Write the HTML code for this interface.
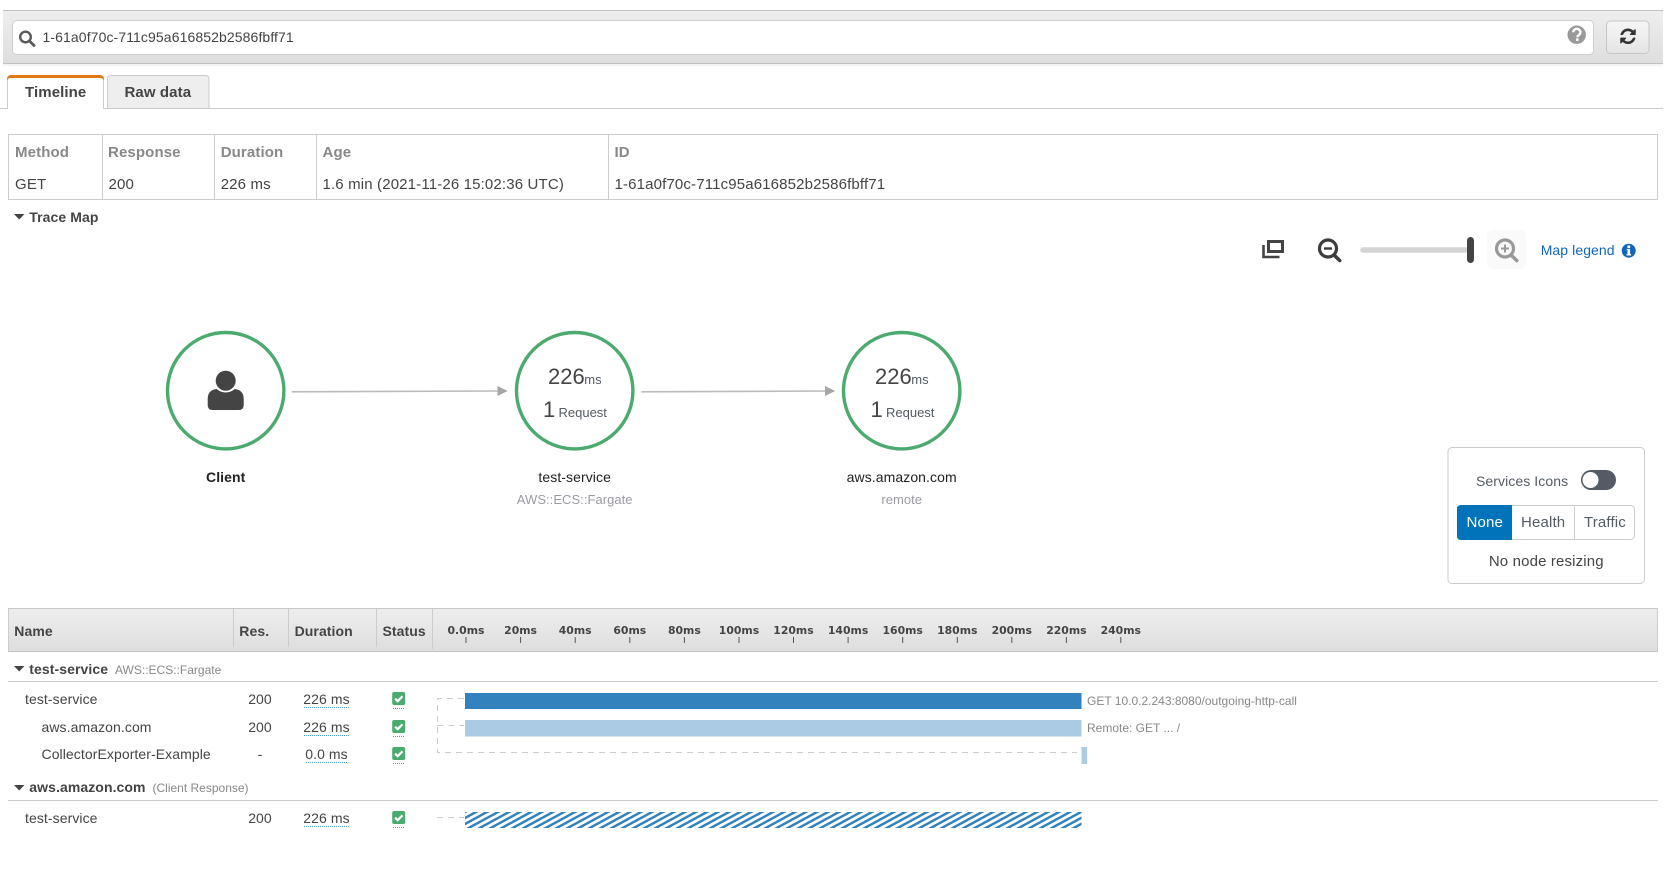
<!DOCTYPE html>
<html><head><meta charset="utf-8"><title>Trace</title>
<style>
html,body{margin:0;padding:0;background:#fff;width:1666px;height:876px;overflow:hidden}
body{position:relative;font-family:"Liberation Sans",sans-serif}
svg{display:block;position:absolute;left:0;top:0}
.t{position:absolute;white-space:pre;color:#444}
.c{width:300px;margin-left:-150px;text-align:center}
.s22{font-size:22px;line-height:25px}
.s15{font-size:15px;line-height:17px;letter-spacing:.15px}
.s14{font-size:14px;line-height:16px;letter-spacing:.08px}
.s13{font-size:13px;line-height:15px}
.s12{font-size:12px;line-height:14px;color:#888}
.b{font-weight:700}
.s15.b{letter-spacing:.1px}
.h{font-size:15px;line-height:17px;font-weight:700;color:#888;letter-spacing:.12px}
.tk{font-family:"DejaVu Sans",sans-serif;font-size:10.85px;font-weight:700;fill:#444;text-anchor:middle}
.g{color:#545b64}
.l{color:#9a9aa8;letter-spacing:.04px}
.k{color:#222}
</style></head><body>
<svg width="1666" height="876" viewBox="0 0 1666 876" xmlns="http://www.w3.org/2000/svg">
<defs>
<linearGradient id="gh" x1="0" y1="0" x2="0" y2="1"><stop offset="0" stop-color="#eeeeee"/><stop offset="1" stop-color="#dedede"/></linearGradient>
<linearGradient id="gb" x1="0" y1="0" x2="0" y2="1"><stop offset="0" stop-color="#f6f6f6"/><stop offset="1" stop-color="#e4e4e4"/></linearGradient>
<pattern id="hatch" patternUnits="userSpaceOnUse" x="465" y="812" width="11" height="6">
<rect width="11" height="6" fill="#fff"/>
<path d="M-2 7.09L13-1.09M-13 7.09L2-1.09M9 7.09L24-1.09" stroke="#3182bd" stroke-width="2.500" fill="none"/>
</pattern>
<g id="chk"><rect x="-6.5" y="-6.5" width="13" height="13" rx="2" fill="#4bab6e"/><path d="M-3.6 0.2L-1 2.7L3.8-2.2" fill="none" stroke="#fff" stroke-width="2.2"/></g>
</defs>

<!-- top bar -->
<rect x="3" y="10.5" width="1660" height="53" fill="url(#gh)"/>
<path d="M3 10.5H1663" stroke="#c4c4c4"/><path d="M3 63.5H1663" stroke="#c0c0c0"/>
<rect x="3" y="64" width="1660" height="2" fill="#f4f4f4"/>
<rect x="12.5" y="20.5" width="1581" height="34" rx="4" fill="#fff" stroke="#cfcfcf"/>
<circle cx="25.5" cy="37" r="5.3" fill="none" stroke="#5a5a5a" stroke-width="2.4"/>
<path d="M29.5 41L34 45.5" stroke="#5a5a5a" stroke-width="2.8" stroke-linecap="round"/>
<circle cx="1576.7" cy="34.7" r="9.2" fill="#999"/>
<path d="M1573.2 32.3a3.6 3.4 0 1 1 5.6 2.8q-1.400 .9-1.400 2.100" fill="none" stroke="#fff" stroke-width="2.300"/>
<rect x="1576.100" y="38.400" width="2.500" height="2.500" fill="#fff"/>
<rect x="1606.500" y="21" width="42.500" height="32.500" rx="4" fill="url(#gb)" stroke="#c6c6c6"/>
<g transform="translate(1618.950 27.250) scale(.0101)"><path fill="#333" d="M1639 1056q0 5-1 7-64 268-268 434.500t-478 166.500q-146 0-282.500-55t-243.500-157l-129 129q-19 19-45 19t-45-19-19-45v-448q0-26 19-45t45-19h448q26 0 45 19t19 45-19 45l-137 137q71 66 161 102t187 36q134 0 250-65t186-179q11-17 53-117 8-23 30-23h192q13 0 22.500 9.500t9.500 22.500zm25-800v448q0 26-19 45t-45 19h-448q-26 0-45-19t-19-45 19-45l138-138q-148-137-349-137-134 0-250 65t-186 179q-11 17-53 117-8 23-30 23h-199q-13 0-22.500-9.500t-9.500-22.500v-7q65-268 270-434.500t480-166.500q146 0 284 55.500t245 156.500l130-129q19-19 45-19t45 19 19 45z"/></g>

<!-- tabs -->
<path d="M0 108.500H1663" stroke="#ccc"/>
<path d="M7.500 108.500V79q0-3.500 3.500-3.500h89q3.500 0 3.500 3.500v29.500" fill="#fff" stroke="#ccc"/>
<path d="M8 108h95v1.500h-95z" fill="#fff"/>
<path d="M7 79.500q0-4.500 4.500-4.500h88q4.500 0 4.500 4.500v1q-1-2.500-4-2.500h-89q-3 0-4 2.500z" fill="#e47911"/>
<path d="M107.500 108.500V79q0-3.500 3.500-3.500h94.500q3.500 0 3.500 3.500v29.500z" fill="#eee" stroke="#ccc"/>

<!-- summary table -->
<rect x="8.500" y="134.500" width="1649" height="65" fill="#fff" stroke="#ccc"/>
<path d="M102.500 134.500V199.500M214.500 134.500V199.500M316.500 134.500V199.500M608.500 134.500V199.500" stroke="#ccc"/>

<path d="M14 214H24.500L19.200 219.500z" fill="#444"/>

<!-- map tools -->
<path d="M1263.500 245V257H1279.500" fill="none" stroke="#444" stroke-width="2.600"/>
<rect x="1268.500" y="241.500" width="14" height="10" fill="none" stroke="#444" stroke-width="3"/>
<circle cx="1328" cy="248.500" r="8.500" fill="none" stroke="#3d3d3d" stroke-width="3.200"/>
<path d="M1324 248.500H1332" stroke="#3d3d3d" stroke-width="2.400"/>
<path d="M1334.500 255.500L1339.700 260.500" stroke="#3d3d3d" stroke-width="3.600" stroke-linecap="round"/>
<rect x="1360.300" y="247.300" width="114" height="5.500" rx="2.700" fill="#d5d5d5"/>
<rect x="1467" y="237" width="7" height="26" rx="3.500" fill="#444"/>
<rect x="1487" y="230" width="39" height="39" rx="6" fill="#fafafa"/>
<circle cx="1505" cy="248.500" r="8.500" fill="none" stroke="#999" stroke-width="3.200"/>
<path d="M1501 248.500H1509M1505 244.500V252.500" stroke="#999" stroke-width="2"/>
<path d="M1511.500 255.500L1516.700 260.500" stroke="#999" stroke-width="3.600" stroke-linecap="round"/>
<circle cx="1628.700" cy="250.700" r="7" fill="#1166bb"/>
<rect x="1627.500" y="249.500" width="2.600" height="5.500" fill="#fff"/><rect x="1626.500" y="254" width="4.600" height="1.500" fill="#fff"/><rect x="1626.700" y="249" width="3" height="1.300" fill="#fff"/><circle cx="1628.800" cy="246.800" r="1.500" fill="#fff"/>

<!-- map nodes -->
<circle cx="225.700" cy="390.700" r="58.200" fill="#fff" stroke="#4caa6e" stroke-width="3.400"/>
<circle cx="574.700" cy="390.700" r="58.200" fill="#fff" stroke="#4caa6e" stroke-width="3.400"/>
<circle cx="901.700" cy="390.700" r="58.200" fill="#fff" stroke="#4caa6e" stroke-width="3.400"/>
<path d="M207.700 405v-6q0-9 9-10q4 3.500 9 3.500t9-3.500q9 1 9 10v6q0 5-5 5h-26q-5 0-5-5z" fill="#444"/>
<circle cx="225.700" cy="380.700" r="10" fill="#444"/>
<path d="M291.700 391.800L498 391" stroke="#bbb" stroke-width="1.600"/>
<path d="M497.500 386L507.700 391L497.500 396z" fill="#a6a6a6"/>
<path d="M641.500 391.800L827 391" stroke="#bbb" stroke-width="1.600"/>
<path d="M825 386L835.200 391L825 396z" fill="#a6a6a6"/>

<!-- panel -->
<rect x="1448" y="447.500" width="196.500" height="136" rx="4" fill="#fff" stroke="#ccc"/>
<rect x="1581" y="470" width="35" height="20" rx="10" fill="#545b64"/>
<circle cx="1590.500" cy="480" r="8" fill="#fff"/>
<rect x="1457.500" y="505.500" width="177" height="34" rx="4" fill="#fff" stroke="#ccc"/>
<path d="M1461 505H1512V540H1461q-4 0-4-4V509q0-4 4-4z" fill="#0073bb"/>
<path d="M1574.500 505.500V539.500" stroke="#ccc"/>

<!-- timeline header -->
<rect x="8" y="608.500" width="1650" height="43" fill="url(#gh)"/>
<path d="M8 608.500H1658" stroke="#c8c8c8"/><path d="M8 651.500H1658" stroke="#c4c4c4"/>
<path d="M8.500 608.500V651.500M1657.500 608.500V651.500" stroke="#ccc"/>
<path d="M233.500 609V647M288.500 609V647M376.500 609V647M432.500 609V649" stroke="#ccc"/>

<text x="466" y="634" class="tk">0.0ms</text><text x="520.600" y="634" class="tk">20ms</text><text x="575.200" y="634" class="tk">40ms</text><text x="629.800" y="634" class="tk">60ms</text><text x="684.400" y="634" class="tk">80ms</text><text x="739" y="634" class="tk">100ms</text><text x="793.500" y="634" class="tk">120ms</text><text x="848.100" y="634" class="tk">140ms</text><text x="902.700" y="634" class="tk">160ms</text><text x="957.300" y="634" class="tk">180ms</text><text x="1011.800" y="634" class="tk">200ms</text><text x="1066.400" y="634" class="tk">220ms</text><text x="1120.800" y="634" class="tk">240ms</text>
<path d="M466 637V643M520.600 637V643M575.200 637V643M629.800 637V643M684.400 637V643M739 637V643M793.500 637V643M848.100 637V643M902.700 637V643M957.300 637V643M1011.800 637V643M1066.400 637V643M1120.800 637V643" stroke="#555" stroke-width="1"/>

<!-- groups -->
<path d="M14 666H24.500L19.200 671.500z" fill="#444"/>
<path d="M8 681.500H1658" stroke="#ccc"/>
<path d="M14 785H24.500L19.200 790.500z" fill="#444"/>
<path d="M8 800.500H1658" stroke="#ccc"/>

<!-- rows decorations -->
<path d="M304 707.500H350M304 735.500H350M306 762.500H348M304 826.500H350" stroke="#4a9bd0" stroke-dasharray="1 1" fill="none"/>
<path d="M393 708.500H405M393 736.500H405M393 763.500H405M393 827.500H405" stroke="#4bab6e" stroke-dasharray="1 1" fill="none"/>
<use href="#chk" x="398.700" y="698.500"/><use href="#chk" x="398.700" y="726.500"/><use href="#chk" x="398.700" y="753.500"/><use href="#chk" x="398.700" y="817.500"/>

<!-- connectors -->
<path d="M464 698.500H437.500V752.500H1077" fill="none" stroke="#ccc" stroke-dasharray="6 5"/>
<path d="M437.500 725.500H464" fill="none" stroke="#ccc" stroke-dasharray="6 5"/>
<path d="M437 817.500H464" fill="none" stroke="#ccc" stroke-dasharray="6 5"/>

<!-- bars -->
<rect x="465" y="693" width="616.500" height="16" fill="#3182bd"/>
<rect x="465" y="720" width="616.500" height="16.500" fill="#abcbe5"/>
<rect x="1081.500" y="747" width="5.500" height="17" fill="#abcbe5"/>
<rect x="465" y="812" width="616.500" height="16" fill="url(#hatch)"/>
</svg>

<span class="t s14" style="left:42.500px;top:29px;letter-spacing:.1px">1-61a0f70c-711c95a616852b2586fbff71</span>
<span class="t s15 b" style="left:25px;top:84px">Timeline</span>
<span class="t s15 b" style="left:124.500px;top:84px">Raw data</span>

<span class="t h" style="left:15px;top:144px">Method</span><span class="t h" style="left:108px;top:144px">Response</span><span class="t h" style="left:220.700px;top:144px">Duration</span><span class="t h" style="left:322.500px;top:144px">Age</span><span class="t h" style="left:614.500px;top:144px">ID</span>
<span class="t s15" style="left:15px;top:176px">GET</span><span class="t s15" style="left:108.500px;top:176px">200</span><span class="t s15" style="left:220.700px;top:176px">226 ms</span><span class="t s15" style="left:322.500px;top:176px">1.6 min (2021-11-26 15:02:36 UTC)</span><span class="t s15" style="left:614.500px;top:176px">1-61a0f70c-711c95a616852b2586fbff71</span>
<span class="t s14 b" style="left:29.300px;top:209px">Trace Map</span>
<span class="t s14" style="left:1540.700px;top:242px;color:#1166bb">Map legend</span>

<span class="t s22" style="left:548px;top:364px">226</span><span class="t s13 g" style="left:584.300px;top:372px">ms</span>
<span class="t s22" style="left:543px;top:397px">1</span><span class="t s13 g" style="left:558.500px;top:405px">Request</span>
<span class="t s22" style="left:875px;top:364px">226</span><span class="t s13 g" style="left:911.300px;top:372px">ms</span>
<span class="t s22" style="left:870.500px;top:397px">1</span><span class="t s13 g" style="left:886px;top:405px">Request</span>

<span class="t s14 b k c" style="left:225.700px;top:469px">Client</span>
<span class="t s14 k c" style="left:574.700px;top:469px">test-service</span>
<span class="t s13 l c" style="left:574.700px;top:492px">AWS::ECS::Fargate</span>
<span class="t s14 k c" style="left:901.700px;top:469px">aws.amazon.com</span>
<span class="t s13 l c" style="left:901.700px;top:492px">remote</span>

<span class="t s14 g" style="left:1476px;top:473px">Services Icons</span>
<span class="t s15" style="left:1466.500px;top:514px;color:#fff">None</span>
<span class="t s15 g" style="left:1521px;top:514px">Health</span>
<span class="t s15 g" style="left:1584px;top:514px">Traffic</span>
<span class="t s15 c" style="left:1546.300px;top:553px">No node resizing</span>

<span class="t s14 b" style="left:14.300px;top:623px">Name</span><span class="t s14 b" style="left:239.300px;top:623px">Res.</span><span class="t s14 b" style="left:294.600px;top:623px">Duration</span><span class="t s14 b" style="left:382.500px;top:623px">Status</span>

<span class="t s14 b" style="left:29.300px;top:661px">test-service</span>
<span class="t s12" style="left:115px;top:663px">AWS::ECS::Fargate</span>
<span class="t s14 b" style="left:29.300px;top:779px">aws.amazon.com</span>
<span class="t s12" style="left:152.500px;top:781px">(Client Response)</span>

<span class="t s14" style="left:25px;top:691px">test-service</span><span class="t s14 c" style="left:260px;top:691px">200</span><span class="t s14 c" style="left:326.500px;top:691px">226 ms</span>
<span class="t s14" style="left:41.500px;top:719px">aws.amazon.com</span><span class="t s14 c" style="left:260px;top:719px">200</span><span class="t s14 c" style="left:326.500px;top:719px">226 ms</span>
<span class="t s14" style="left:41.500px;top:746px">CollectorExporter-Example</span><span class="t s14 c" style="left:260px;top:746px">-</span><span class="t s14 c" style="left:326.500px;top:746px">0.0 ms</span>
<span class="t s14" style="left:25px;top:810px">test-service</span><span class="t s14 c" style="left:260px;top:810px">200</span><span class="t s14 c" style="left:326.500px;top:810px">226 ms</span>

<span class="t s12" style="left:1087px;top:694px">GET 10.0.2.243:8080/outgoing-http-call</span>
<span class="t s12" style="left:1087px;top:721px">Remote: GET ... /</span>
</body></html>
